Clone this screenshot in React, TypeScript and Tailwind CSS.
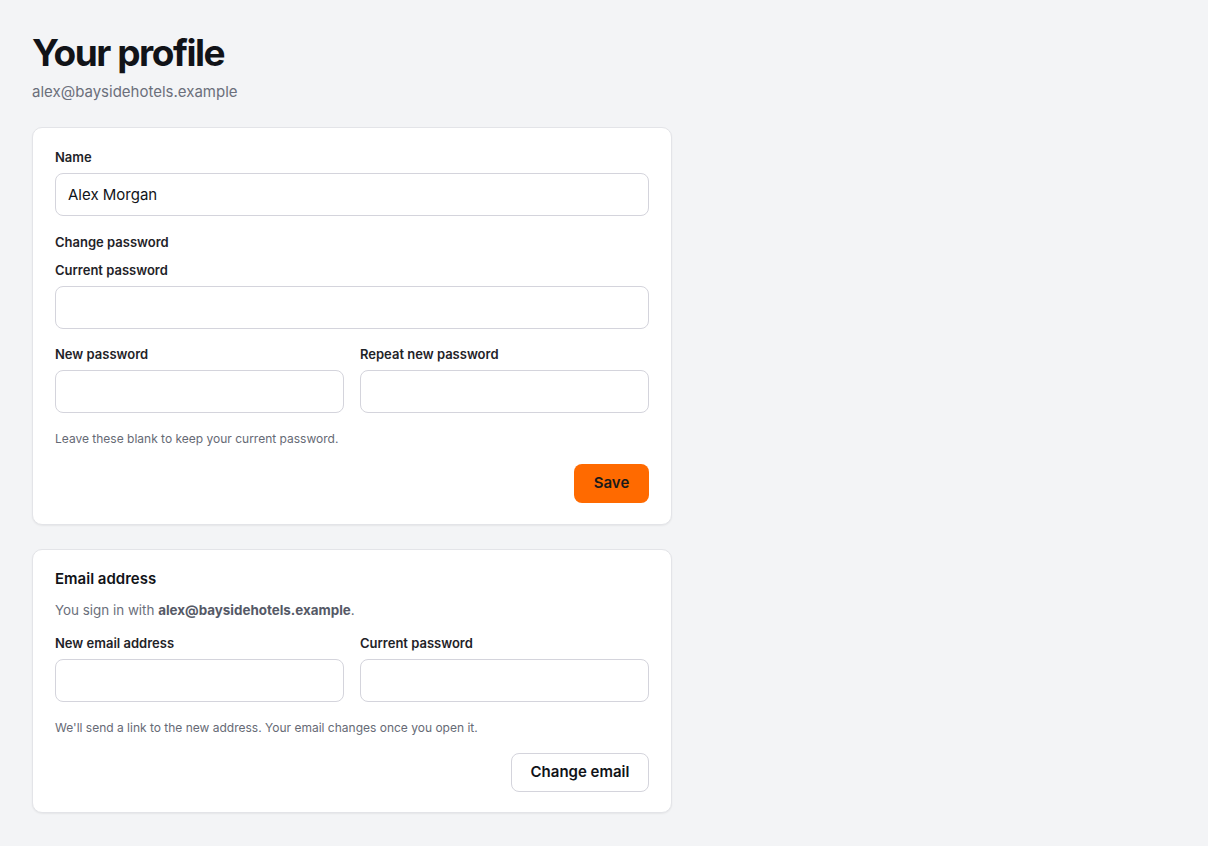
import React from "react";

const font = { fontFamily: "Inter, 'Noto Sans', sans-serif" };

function Field({ label, value = "" }: { label: string; value?: string }) {
  return (
    <label className="flex flex-col gap-[8px]">
      <span className="text-[13px] font-semibold leading-4 text-[#1f2328]">{label}</span>
      <input
        defaultValue={value}
        className="h-[43px] w-full rounded-lg border border-[#d4d4dc] bg-white px-3 text-[15px] text-[#111318] outline-none"
      />
    </label>
  );
}

export default function App() {
  return (
    <div className="min-h-screen bg-[#f3f4f6] px-8 pt-[33px] pb-8" style={font}>
      <h1 className="text-[37px] font-bold leading-[40px] tracking-[-0.04em] text-[#111318]">Your profile</h1>
      <p className="mt-[9px] text-[15px] leading-5 text-[#6b6f7b]">alex@baysidehotels.example</p>

      <div className="mt-[25px] flex w-[640px] flex-col gap-[24px]">
        <section className="flex flex-col rounded-[10px] border border-[#e3e4e8] bg-white px-[22px] pt-[21px] pb-[21px] shadow-[0_1px_2px_rgba(0,0,0,0.06)]">
          <Field label="Name" value="Alex Morgan" />
          <div className="mt-[18px] text-[13px] font-semibold leading-4 text-[#1f2328]">Change password</div>
          <div className="mt-[12px]">
            <Field label="Current password" />
          </div>
          <div className="mt-[17px] grid grid-cols-2 gap-4">
            <Field label="New password" />
            <Field label="Repeat new password" />
          </div>
          <p className="mt-[18px] text-[12px] leading-4 text-[#666a75]">Leave these blank to keep your current password.</p>
          <div className="mt-[17px] flex justify-end">
            <button className="h-[39px] w-[75px] rounded-lg bg-[#ff6a00] text-[15px] font-semibold text-[#1a1a1a]">Save</button>
          </div>
        </section>

        <section className="flex flex-col rounded-[10px] border border-[#e3e4e8] bg-white px-[22px] pt-[19px] pb-5 shadow-[0_1px_2px_rgba(0,0,0,0.06)]">
          <h2 className="text-[15px] font-semibold leading-5 text-[#111318]">Email address</h2>
          <p className="mt-[13px] text-[13.4px] leading-4 text-[#6b6f7b]">
            You sign in with <span className="font-bold text-[#555966]">alex@baysidehotels.example</span>.
          </p>
          <div className="mt-[17px] grid grid-cols-2 gap-4">
            <Field label="New email address" />
            <Field label="Current password" />
          </div>
          <p className="mt-[18px] text-[12px] leading-4 text-[#666a75]">
            We'll send a link to the new address. Your email changes once you open it.
          </p>
          <div className="mt-[17px] flex justify-end">
            <button className="h-[39px] w-[138px] rounded-lg border border-[#d4d4dc] bg-white text-[15px] font-semibold text-[#111318]">
              Change email
            </button>
          </div>
        </section>
      </div>
    </div>
  );
}
